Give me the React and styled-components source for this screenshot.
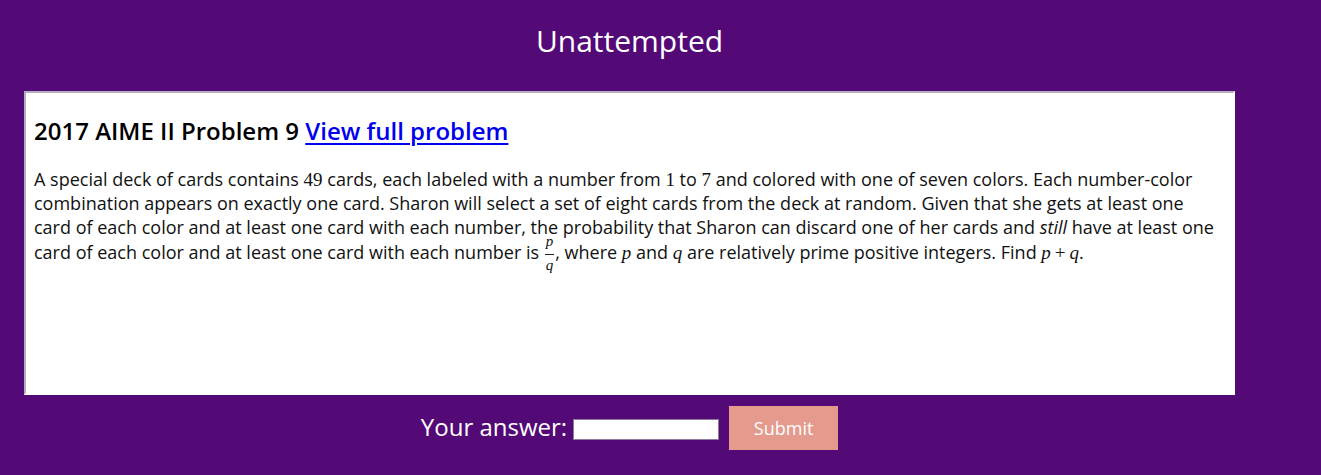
import React from "react";
import styled, { createGlobalStyle } from "styled-components";

const Global = createGlobalStyle`
  html, body { margin: 0; padding: 0; }
  body {
    background: #530a76;
    font-family: "Open Sans", "Noto Sans", sans-serif;
  }
`;

const Page = styled.div`
  width: 1259px;
  display: flex;
  flex-direction: column;
  align-items: center;
`;

const Status = styled.h1`
  margin: 0;
  padding-top: 21px;
  height: 91px;
  box-sizing: border-box;
  font-size: 30px;
  font-weight: 400;
  color: #fff;
  line-height: 40px;
`;

const ProblemBox = styled.div`
  align-self: stretch;
  margin: 0 24px;
  height: 304px;
  box-sizing: border-box;
  background: #fff;
  border-style: solid;
  border-width: 2px;
  border-color: #b4adbb #ffffff #ffffff #b4adbb;
  padding: 22px 8px 8px 8px;
  color: #111;
`;

const Heading = styled.h2`
  margin: 0 0 20px;
  font-size: 24px;
  font-weight: 600;
  line-height: 32px;
  color: #000;
`;

const Link = styled.a`
  color: #0000ee;
  text-decoration: underline;
  text-underline-offset: 3px;
`;

const Statement = styled.p`
  margin: 0;
  font-size: 18px;
  line-height: 24px;
  color: #111;
`;

const M = styled.span`
  font-family: "Liberation Serif", "DejaVu Serif", serif;
  font-style: ${(p) => (p.$upright ? "normal" : "italic")};
  font-size: 19px;
  line-height: 1;
`;

const Op = styled.span`
  font-family: "Liberation Serif", "DejaVu Serif", serif;
  font-size: 19px;
  line-height: 1;
  margin: 0 4px;
`;

const Frac = styled.span`
  display: inline-flex;
  flex-direction: column;
  align-items: center;
  vertical-align: 13px;
  font-family: "Liberation Serif", "DejaVu Serif", serif;
  font-style: italic;
  font-size: 15px;
  margin: 0 1px;
`;

const Num = styled.span`
  line-height: 4px;
  padding: 0 1px 11px;
  border-bottom: 1px solid #222;
`;

const Den = styled.span`
  line-height: 10px;
  padding: 5px 1px 0;
`;

const AnswerRow = styled.form`
  display: flex;
  align-items: center;
  gap: 10px;
  margin-top: 11px;
`;

const Label = styled.label`
  color: #fff;
  font-size: 24px;
  display: flex;
  align-items: center;
  gap: 6px;
  margin-top: -3px;
`;

const Input = styled.input`
  width: 146px;
  height: 21px;
  box-sizing: border-box;
  border: 1px solid #8e7aa0;
  background: #fff;
  padding: 0 2px;
  margin: 5px 0 0;
`;

const Submit = styled.button`
  width: 109px;
  height: 44px;
  border: none;
  background: #e49a8c;
  color: #fff;
  font-family: "Open Sans", "Noto Sans", sans-serif;
  font-size: 18px;
  cursor: pointer;
`;

export default function App() {
  return (
    <>
      <Global />
      <Page>
        <Status>Unattempted</Status>
        <ProblemBox>
          <Heading>
            2017 AIME II Problem 9 <Link href="#">View full problem</Link>
          </Heading>
          <Statement>
            A special deck of cards contains <M $upright>49</M> cards, each labeled with a number from{" "}
            <M $upright>1</M> to <M $upright>7</M> and colored with one of seven colors. Each number-color
            combination appears on exactly one card. Sharon will select a set of eight cards from the deck at
            random. Given that she gets at least one card of each color and at least one card with each number,
            the probability that Sharon can discard one of her cards and <em>still</em> have at least one card of
            each color and at least one card with each number is{" "}
            <Frac>
              <Num>p</Num>
              <Den>q</Den>
            </Frac>
            , where <M>p</M> and <M>q</M> are relatively prime positive integers. Find <M>p</M>
            <Op>+</Op>
            <M>q</M>.
          </Statement>
        </ProblemBox>
        <AnswerRow onSubmit={(e) => e.preventDefault()}>
          <Label>
            Your answer:
            <Input type="text" />
          </Label>
          <Submit type="submit">Submit</Submit>
        </AnswerRow>
      </Page>
    </>
  );
}
